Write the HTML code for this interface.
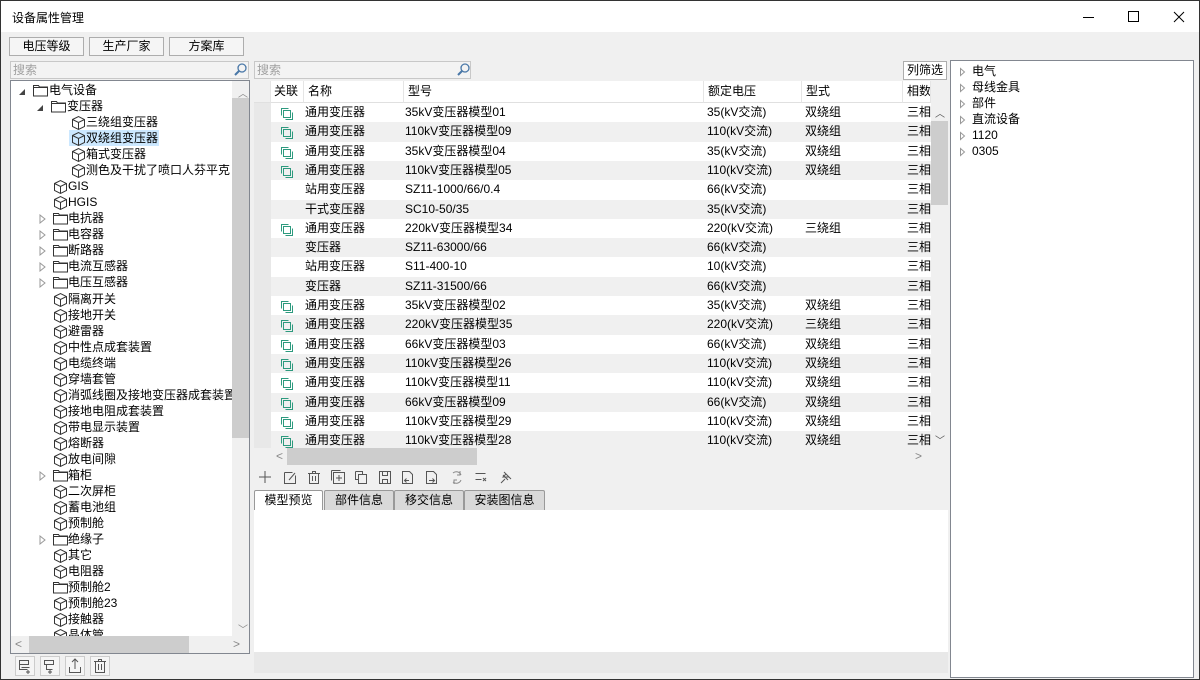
<!DOCTYPE html>
<html><head><meta charset="utf-8"><style>
*{margin:0;padding:0;box-sizing:border-box}
body{width:1200px;height:680px;overflow:hidden;font-family:"Liberation Sans","Noto Sans CJK SC",sans-serif;font-size:12px;color:#000;background:#fff}
.a{position:absolute}
#win{position:absolute;left:0;top:0;width:1200px;height:680px;border:1px solid #333;background:#f0f0f0}
.btn{position:absolute;top:36px;height:19px;border:1px solid #adadad;background:#f5f5f5;text-align:center;line-height:17px}
.search{position:absolute;height:18px;border:1px solid #c8c8c8;background:#f3f3f3;color:#a0a0a0;line-height:16px;padding-left:2px}
.tr{position:absolute;height:16px;line-height:16px;white-space:nowrap}
.tr svg{position:absolute;top:1px}
.row{position:absolute;left:270px;width:660px;height:19.3px;line-height:19px;white-space:nowrap}
.row span{position:absolute}
.g{background:#f0f0f0}
.rh{position:absolute;left:253px;width:17px;background:#e8e8e8}
.hd{position:absolute;top:80px;height:22px;line-height:21px;background:#fff;border-right:1px solid #e5e5e5;padding-left:4px;border-bottom:1px solid #e0e0e0}
.tb svg{position:absolute;top:467px}
.tab{position:absolute;top:489px;height:20px;border:1px solid #999;border-bottom:none;background:#d9d9d9;text-align:center;line-height:18px;border-radius:2px 2px 0 0}
</style></head><body>
<div id="win">
<div class="a" style="left:0;top:0;width:1198px;height:31px;background:#fff"></div>
<div class="a" style="left:11px;top:8px;font-size:12px">设备属性管理</div>
<svg class="a" style="left:1080px;top:8px" width="110" height="16"><line x1="2" y1="8.5" x2="13" y2="8.5" stroke="#000"/><rect x="47.5" y="2.5" width="10" height="10" fill="none" stroke="#000"/><path d="M93 3l10 10M103 3l-10 10" stroke="#000"/></svg>

<div class="btn" style="left:8px;width:75px">电压等级</div>
<div class="btn" style="left:88px;width:75px">生产厂家</div>
<div class="btn" style="left:168px;width:75px">方案库</div>

<div class="search" style="left:9px;top:60px;width:239px">搜索</div>
<svg class="a" style="left:231px;top:61px" width="16" height="16"><circle cx="10" cy="6" r="4" fill="none" stroke="#4a78a8" stroke-width="1.3"/><line x1="7" y1="9" x2="3" y2="13" stroke="#4a78a8" stroke-width="2"/></svg>

<!-- left tree -->
<div class="a" style="left:9px;top:79px;width:240px;height:574px;border:1px solid #828790;background:#fff;overflow:hidden">
<div class="a" style="left:221px;top:0;width:17px;height:555px;background:#f0f0f0"></div>
<div class="a" style="left:221px;top:17px;width:17px;height:340px;background:#cdcdcd"></div>
<div class="a" style="left:227px;top:4px;color:#888;font-size:10px">︿</div>
<div class="a" style="left:227px;top:540px;color:#888;font-size:10px">﹀</div>
<div class="a" style="left:0;top:555px;width:238px;height:17px;background:#f0f0f0"></div>
<div class="a" style="left:18px;top:555px;width:160px;height:17px;background:#cdcdcd"></div>
<div class="a" style="left:4px;top:556px;color:#888">&lt;</div>
<div class="a" style="left:222px;top:556px;color:#888">&gt;</div>
<div class="a" style="left:0;top:0;width:221px;height:555px;overflow:hidden">
<svg width="0" height="0" style="position:absolute"><defs>
<g id="fd"><path d="M0.5 2.5h5l1 1.5h8v9h-14z M0.5 4.5h14" fill="none" stroke="#333"/></g>
<g id="cb"><path d="M1.5 4.5l6-3 6 3v7l-6 3-6-3z M1.5 4.5l6 3 6-3 M7.5 7.5v7" fill="none" stroke="#333"/></g>
<g id="ad"><path d="M6 2v6h-6z" fill="#444"/></g>
<g id="ar"><path d="M1 1l5 4-5 4z" fill="none" stroke="#999"/></g>
</defs></svg>
<div class="tr" style="top:1px;left:8px"><svg style="left:0;top:5px" width="8" height="10"><use href="#ad"/></svg><svg style="left:14px" width="16" height="16"><use href="#fd"/></svg><span style="position:absolute;left:30px">电气设备</span></div>
<div class="tr" style="top:17px;left:26px"><svg style="left:0;top:5px" width="8" height="10"><use href="#ad"/></svg><svg style="left:14px" width="16" height="16"><use href="#fd"/></svg><span style="position:absolute;left:30px">变压器</span></div>
<div class="tr" style="top:33px;left:60px"><svg style="left:0" width="16" height="16"><use href="#cb"/></svg><span style="position:absolute;left:15px">三绕组变压器</span></div>
<div class="a" style="top:49px;left:58px;width:90px;height:16px;background:#cce8ff"></div>
<div class="tr" style="top:49px;left:60px"><svg style="left:0" width="16" height="16"><use href="#cb"/></svg><span style="position:absolute;left:15px">双绕组变压器</span></div>
<div class="tr" style="top:65px;left:60px"><svg style="left:0" width="16" height="16"><use href="#cb"/></svg><span style="position:absolute;left:15px">箱式变压器</span></div>
<div class="tr" style="top:81px;left:60px"><svg style="left:0" width="16" height="16"><use href="#cb"/></svg><span style="position:absolute;left:15px">测色及干扰了喷口人芬平克</span></div>
<div class="tr" style="top:97px;left:42px"><svg style="left:0" width="16" height="16"><use href="#cb"/></svg><span style="position:absolute;left:15px">GIS</span></div>
<div class="tr" style="top:113px;left:42px"><svg style="left:0" width="16" height="16"><use href="#cb"/></svg><span style="position:absolute;left:15px">HGIS</span></div>
<div class="tr" style="top:129px;left:28px"><svg style="left:0;top:4px" width="8" height="10"><use href="#ar"/></svg><svg style="left:14px" width="16" height="16"><use href="#fd"/></svg><span style="position:absolute;left:29px">电抗器</span></div>
<div class="tr" style="top:145px;left:28px"><svg style="left:0;top:4px" width="8" height="10"><use href="#ar"/></svg><svg style="left:14px" width="16" height="16"><use href="#fd"/></svg><span style="position:absolute;left:29px">电容器</span></div>
<div class="tr" style="top:161px;left:28px"><svg style="left:0;top:4px" width="8" height="10"><use href="#ar"/></svg><svg style="left:14px" width="16" height="16"><use href="#fd"/></svg><span style="position:absolute;left:29px">断路器</span></div>
<div class="tr" style="top:177px;left:28px"><svg style="left:0;top:4px" width="8" height="10"><use href="#ar"/></svg><svg style="left:14px" width="16" height="16"><use href="#fd"/></svg><span style="position:absolute;left:29px">电流互感器</span></div>
<div class="tr" style="top:193px;left:28px"><svg style="left:0;top:4px" width="8" height="10"><use href="#ar"/></svg><svg style="left:14px" width="16" height="16"><use href="#fd"/></svg><span style="position:absolute;left:29px">电压互感器</span></div>
<div class="tr" style="top:210px;left:42px"><svg style="left:0" width="16" height="16"><use href="#cb"/></svg><span style="position:absolute;left:15px">隔离开关</span></div>
<div class="tr" style="top:226px;left:42px"><svg style="left:0" width="16" height="16"><use href="#cb"/></svg><span style="position:absolute;left:15px">接地开关</span></div>
<div class="tr" style="top:242px;left:42px"><svg style="left:0" width="16" height="16"><use href="#cb"/></svg><span style="position:absolute;left:15px">避雷器</span></div>
<div class="tr" style="top:258px;left:42px"><svg style="left:0" width="16" height="16"><use href="#cb"/></svg><span style="position:absolute;left:15px">中性点成套装置</span></div>
<div class="tr" style="top:274px;left:42px"><svg style="left:0" width="16" height="16"><use href="#cb"/></svg><span style="position:absolute;left:15px">电缆终端</span></div>
<div class="tr" style="top:290px;left:42px"><svg style="left:0" width="16" height="16"><use href="#cb"/></svg><span style="position:absolute;left:15px">穿墙套管</span></div>
<div class="tr" style="top:306px;left:42px"><svg style="left:0" width="16" height="16"><use href="#cb"/></svg><span style="position:absolute;left:15px">消弧线圈及接地变压器成套装置</span></div>
<div class="tr" style="top:322px;left:42px"><svg style="left:0" width="16" height="16"><use href="#cb"/></svg><span style="position:absolute;left:15px">接地电阻成套装置</span></div>
<div class="tr" style="top:338px;left:42px"><svg style="left:0" width="16" height="16"><use href="#cb"/></svg><span style="position:absolute;left:15px">带电显示装置</span></div>
<div class="tr" style="top:354px;left:42px"><svg style="left:0" width="16" height="16"><use href="#cb"/></svg><span style="position:absolute;left:15px">熔断器</span></div>
<div class="tr" style="top:370px;left:42px"><svg style="left:0" width="16" height="16"><use href="#cb"/></svg><span style="position:absolute;left:15px">放电间隙</span></div>
<div class="tr" style="top:386px;left:28px"><svg style="left:0;top:4px" width="8" height="10"><use href="#ar"/></svg><svg style="left:14px" width="16" height="16"><use href="#fd"/></svg><span style="position:absolute;left:29px">箱柜</span></div>
<div class="tr" style="top:402px;left:42px"><svg style="left:0" width="16" height="16"><use href="#cb"/></svg><span style="position:absolute;left:15px">二次屏柜</span></div>
<div class="tr" style="top:418px;left:42px"><svg style="left:0" width="16" height="16"><use href="#cb"/></svg><span style="position:absolute;left:15px">蓄电池组</span></div>
<div class="tr" style="top:434px;left:42px"><svg style="left:0" width="16" height="16"><use href="#cb"/></svg><span style="position:absolute;left:15px">预制舱</span></div>
<div class="tr" style="top:450px;left:28px"><svg style="left:0;top:4px" width="8" height="10"><use href="#ar"/></svg><svg style="left:14px" width="16" height="16"><use href="#fd"/></svg><span style="position:absolute;left:29px">绝缘子</span></div>
<div class="tr" style="top:466px;left:42px"><svg style="left:0" width="16" height="16"><use href="#cb"/></svg><span style="position:absolute;left:15px">其它</span></div>
<div class="tr" style="top:482px;left:42px"><svg style="left:0" width="16" height="16"><use href="#cb"/></svg><span style="position:absolute;left:15px">电阻器</span></div>
<div class="tr" style="top:498px;left:42px"><svg style="left:0" width="16" height="16"><use href="#fd"/></svg><span style="position:absolute;left:15px">预制舱2</span></div>
<div class="tr" style="top:514px;left:42px"><svg style="left:0" width="16" height="16"><use href="#cb"/></svg><span style="position:absolute;left:15px">预制舱23</span></div>
<div class="tr" style="top:530px;left:42px"><svg style="left:0" width="16" height="16"><use href="#cb"/></svg><span style="position:absolute;left:15px">接触器</span></div>
<div class="tr" style="top:546px;left:42px"><svg style="left:0" width="16" height="16"><use href="#cb"/></svg><span style="position:absolute;left:15px">晶体管</span></div>
</div>
</div>
<svg class="a" style="left:14px;top:655px" width="100" height="20" fill="none" stroke="#555">
<rect x="0.5" y="0.5" width="19" height="19" fill="#f5f5f5" stroke="#ccc"/><path d="M4.5 4.5h9v4h-9zM4.5 8.5v5h8M6.5 11.5h8M13 14v4M11 16h4"/>
<rect x="25.5" y="0.5" width="19" height="19" fill="#f5f5f5" stroke="#ccc"/><path d="M29.5 4.5h9v4h-9zM31.5 8.5v5h6M35 14v4M33 16h4"/>
<rect x="50.5" y="0.5" width="19" height="19" fill="#f5f5f5" stroke="#ccc"/><path d="M54.5 11v5.5h11V11M60 3v10M57 6l3-3 3 3"/>
<rect x="75.5" y="0.5" width="19" height="19" fill="#f5f5f5" stroke="#ccc"/><path d="M79 5.5h12M83.5 5.5v-2h3v2M80.5 5.5v11h9v-11M83.5 8v6M86.5 8v6"/>
</svg>

<!-- middle -->
<div class="search" style="left:253px;top:60px;width:217px">搜索</div>
<svg class="a" style="left:454px;top:61px" width="16" height="16"><circle cx="10" cy="6" r="4" fill="none" stroke="#4a78a8" stroke-width="1.3"/><line x1="7" y1="9" x2="3" y2="13" stroke="#4a78a8" stroke-width="2"/></svg>
<div class="a" style="left:902px;top:60px;width:44px;height:19px;border:1px solid #adadad;background:#fff;text-align:center;line-height:17px">列筛选</div>

<div class="a" style="left:253px;top:80px;width:694px;height:384px;background:#fff;overflow:hidden"></div>
<div class="hd" style="left:253px;width:17px;background:#f0f0f0"></div>
<div class="hd" style="left:270px;width:33px;padding-left:3px">关联</div>
<div class="hd" style="left:303px;width:100px">名称</div>
<div class="hd" style="left:403px;width:300px">型号</div>
<div class="hd" style="left:703px;width:98px">额定电压</div>
<div class="hd" style="left:801px;width:101px">型式</div>
<div class="hd" style="left:902px;width:28px;overflow:hidden;white-space:nowrap">相数</div>
<div class="a" style="left:930px;top:80px;width:17px;height:22px;background:#f0f0f0"></div>

<div class="rh" style="top:102px;height:345px"></div>
<svg width="0" height="0" style="position:absolute"><defs><g id="lk"><path d="M2.5 9.5v-7h7M4.5 11.5v-7h7v7zM6.5 13.5h7v-7" fill="none" stroke="#2d9a7e"/></g></defs></svg>
<div style="position:absolute;left:0;top:0;width:930px;height:447px;overflow:hidden">
<div class="row" style="top:102px"><svg class="a" style="left:8px;top:3px" width="16" height="16"><use href="#lk"/></svg><span style="left:34px">通用变压器</span><span style="left:134px">35kV变压器模型01</span><span style="left:436px">35(kV交流)</span><span style="left:534px">双绕组</span><span style="left:636px">三相</span></div>
<div class="row g" style="top:121.3px"><svg class="a" style="left:8px;top:3px" width="16" height="16"><use href="#lk"/></svg><span style="left:34px">通用变压器</span><span style="left:134px">110kV变压器模型09</span><span style="left:436px">110(kV交流)</span><span style="left:534px">双绕组</span><span style="left:636px">三相</span></div>
<div class="row" style="top:140.6px"><svg class="a" style="left:8px;top:3px" width="16" height="16"><use href="#lk"/></svg><span style="left:34px">通用变压器</span><span style="left:134px">35kV变压器模型04</span><span style="left:436px">35(kV交流)</span><span style="left:534px">双绕组</span><span style="left:636px">三相</span></div>
<div class="row g" style="top:159.9px"><svg class="a" style="left:8px;top:3px" width="16" height="16"><use href="#lk"/></svg><span style="left:34px">通用变压器</span><span style="left:134px">110kV变压器模型05</span><span style="left:436px">110(kV交流)</span><span style="left:534px">双绕组</span><span style="left:636px">三相</span></div>
<div class="row" style="top:179.2px"><span style="left:34px">站用变压器</span><span style="left:134px">SZ11-1000/66/0.4</span><span style="left:436px">66(kV交流)</span><span style="left:636px">三相</span></div>
<div class="row g" style="top:198.5px"><span style="left:34px">干式变压器</span><span style="left:134px">SC10-50/35</span><span style="left:436px">35(kV交流)</span><span style="left:636px">三相</span></div>
<div class="row" style="top:217.8px"><svg class="a" style="left:8px;top:3px" width="16" height="16"><use href="#lk"/></svg><span style="left:34px">通用变压器</span><span style="left:134px">220kV变压器模型34</span><span style="left:436px">220(kV交流)</span><span style="left:534px">三绕组</span><span style="left:636px">三相</span></div>
<div class="row g" style="top:237.1px"><span style="left:34px">变压器</span><span style="left:134px">SZ11-63000/66</span><span style="left:436px">66(kV交流)</span><span style="left:636px">三相</span></div>
<div class="row" style="top:256.4px"><span style="left:34px">站用变压器</span><span style="left:134px">S11-400-10</span><span style="left:436px">10(kV交流)</span><span style="left:636px">三相</span></div>
<div class="row g" style="top:275.7px"><span style="left:34px">变压器</span><span style="left:134px">SZ11-31500/66</span><span style="left:436px">66(kV交流)</span><span style="left:636px">三相</span></div>
<div class="row" style="top:295px"><svg class="a" style="left:8px;top:3px" width="16" height="16"><use href="#lk"/></svg><span style="left:34px">通用变压器</span><span style="left:134px">35kV变压器模型02</span><span style="left:436px">35(kV交流)</span><span style="left:534px">双绕组</span><span style="left:636px">三相</span></div>
<div class="row g" style="top:314.3px"><svg class="a" style="left:8px;top:3px" width="16" height="16"><use href="#lk"/></svg><span style="left:34px">通用变压器</span><span style="left:134px">220kV变压器模型35</span><span style="left:436px">220(kV交流)</span><span style="left:534px">三绕组</span><span style="left:636px">三相</span></div>
<div class="row" style="top:333.6px"><svg class="a" style="left:8px;top:3px" width="16" height="16"><use href="#lk"/></svg><span style="left:34px">通用变压器</span><span style="left:134px">66kV变压器模型03</span><span style="left:436px">66(kV交流)</span><span style="left:534px">双绕组</span><span style="left:636px">三相</span></div>
<div class="row g" style="top:352.9px"><svg class="a" style="left:8px;top:3px" width="16" height="16"><use href="#lk"/></svg><span style="left:34px">通用变压器</span><span style="left:134px">110kV变压器模型26</span><span style="left:436px">110(kV交流)</span><span style="left:534px">双绕组</span><span style="left:636px">三相</span></div>
<div class="row" style="top:372.2px"><svg class="a" style="left:8px;top:3px" width="16" height="16"><use href="#lk"/></svg><span style="left:34px">通用变压器</span><span style="left:134px">110kV变压器模型11</span><span style="left:436px">110(kV交流)</span><span style="left:534px">双绕组</span><span style="left:636px">三相</span></div>
<div class="row g" style="top:391.5px"><svg class="a" style="left:8px;top:3px" width="16" height="16"><use href="#lk"/></svg><span style="left:34px">通用变压器</span><span style="left:134px">66kV变压器模型09</span><span style="left:436px">66(kV交流)</span><span style="left:534px">双绕组</span><span style="left:636px">三相</span></div>
<div class="row" style="top:410.8px"><svg class="a" style="left:8px;top:3px" width="16" height="16"><use href="#lk"/></svg><span style="left:34px">通用变压器</span><span style="left:134px">110kV变压器模型29</span><span style="left:436px">110(kV交流)</span><span style="left:534px">双绕组</span><span style="left:636px">三相</span></div>
<div class="row g" style="top:430.1px"><svg class="a" style="left:8px;top:3px" width="16" height="16"><use href="#lk"/></svg><span style="left:34px">通用变压器</span><span style="left:134px">110kV变压器模型28</span><span style="left:436px">110(kV交流)</span><span style="left:534px">双绕组</span><span style="left:636px">三相</span></div>
</div>
<div class="a" style="left:930px;top:102px;width:17px;height:345px;background:#f0f0f0"></div>
<div class="a" style="left:930px;top:120px;width:17px;height:84px;background:#cdcdcd"></div>
<div class="a" style="left:934px;top:104px;color:#555;font-size:10px">︿</div>
<div class="a" style="left:934px;top:431px;color:#555;font-size:10px">﹀</div>
<div class="a" style="left:253px;top:447px;width:694px;height:17px;background:#f0f0f0"></div>
<div class="a" style="left:286px;top:447px;width:190px;height:17px;background:#cdcdcd"></div>
<div class="a" style="left:275px;top:448px;color:#888">&lt;</div>
<div class="a" style="left:914px;top:448px;color:#888">&gt;</div>

<div class="tb"><svg class="a" style="left:256px;top:467px" width="270" height="18" fill="none" stroke="#555">
<path d="M8 3v12M2 9h12"/>
<path d="M27.5 4.5h8M27.5 4.5v11h11v-8M32 12l6-7"/>
<path d="M51 5.5h12M55.5 5.5v-2h3v2M52.5 5.5v10h9v-10M55.5 8v5M58.5 8v5"/>
<path d="M74.5 2.5h9M74.5 2.5v10M76.5 4.5h11v11h-11zM82 7v6M79 10h6"/>
<path d="M98.5 3.5h7v3M98.5 3.5v8h3M101.5 6.5h8v9h-8z"/>
<path d="M122.5 3.5h11v12h-11zM125.5 3.5v4h5v-4M125.5 15.5v-4h5v4"/>
<path d="M145.5 3.5h7l3 3v9h-10zM152 12.5h-4M149.5 10.5l-2 2 2 2"/>
<path d="M169.5 3.5h7l3 3v9h-10zM172 12.5h5M175.5 10.5l2 2-2 2"/>
<path d="M196 5a5 5 0 0 1 8 2M204 12a5 5 0 0 1-8 2M203 3v4h-3M197 16v-4h3" stroke="#888"/>
<path d="M218.5 5.5h10M218.5 11.5h6M226 10l3 3M229 10l-3 3"/>
<path d="M244 15l4-4M246 7l5 5M247 4l7 7M249 6l-3 3 6 0"/>
</svg></div>

<div class="tab" style="left:253px;width:69px;background:#fff;height:21px">模型预览</div>
<div class="tab" style="left:323px;width:70px">部件信息</div>
<div class="tab" style="left:393px;width:70px">移交信息</div>
<div class="tab" style="left:463px;width:81px">安装图信息</div>
<div class="a" style="left:253px;top:509px;width:694px;height:142px;background:#fff"></div>
<div class="a" style="left:253px;top:651px;width:694px;height:21px;background:#e8e8e8"></div>

<!-- right -->
<div class="a" style="left:949px;top:59px;width:244px;height:618px;border:1px solid #828790;background:#fff">
<svg class="a" style="left:8px;top:6px" width="8" height="100"><g fill="none" stroke="#999"><path d="M1.5 1.5l4 3.5-4 3.5z"/><path d="M1.5 17.5l4 3.5-4 3.5z"/><path d="M1.5 33.5l4 3.5-4 3.5z"/><path d="M1.5 49.5l4 3.5-4 3.5z"/><path d="M1.5 65.5l4 3.5-4 3.5z"/><path d="M1.5 81.5l4 3.5-4 3.5z"/></g></svg>
<div class="a" style="left:21px;top:2px;line-height:16px">电气<br>母线金具<br>部件<br>直流设备<br>1120<br>0305</div>
</div>
</div>
</body></html>
